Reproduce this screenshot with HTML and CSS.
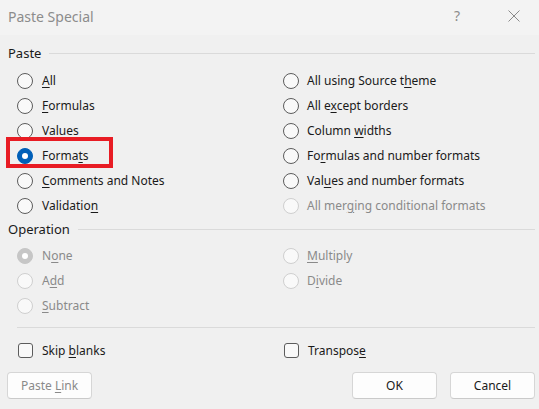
FILE: index.html
```html
<!DOCTYPE html>
<html>
<head>
<meta charset="utf-8">
<link rel="stylesheet" href="styles.css">
</head>
<body>
<div class="dialog">
  <div class="titlebar">
    <span class="title">Paste Special</span>
    <span class="help">?</span>
    <span class="close"><svg width="12" height="12" viewBox="0 0 12 12"><path d="M0.5 0.5 L11.5 11.5 M11.5 0.5 L0.5 11.5" stroke="#8a8a8a" stroke-width="1" fill="none"/></svg></span>
  </div>
  <div class="body">
    <div class="group-head"><span class="group-label">Paste</span><span class="group-line"></span></div>
    <div class="options paste">
      <div class="opt"><span class="radio"></span><span><u>A</u>ll</span></div>
      <div class="opt"><span class="radio"></span><span>All using Source t<u>h</u>eme</span></div>
      <div class="opt"><span class="radio"></span><span><u>F</u>ormulas</span></div>
      <div class="opt"><span class="radio"></span><span>All e<u>x</u>cept borders</span></div>
      <div class="opt"><span class="radio"></span><span>Values</span></div>
      <div class="opt"><span class="radio"></span><span>Column <u>w</u>idths</span></div>
      <div class="opt selected-wrap"><span class="radio checked"></span><span>Forma<u>t</u>s</span><span class="highlight"></span></div>
      <div class="opt"><span class="radio"></span><span>Fo<u>r</u>mulas and number formats</span></div>
      <div class="opt"><span class="radio"></span><span><u>C</u>omments and Notes</span></div>
      <div class="opt"><span class="radio"></span><span>Val<u>u</u>es and number formats</span></div>
      <div class="opt"><span class="radio"></span><span>Validatio<u>n</u></span></div>
      <div class="opt disabled"><span class="radio"></span><span>All mer<u>g</u>ing conditional formats</span></div>
    </div>
    <div class="group-head op-head"><span class="group-label">Operation</span><span class="group-line"></span></div>
    <div class="options operation">
      <div class="opt disabled"><span class="radio checked"></span><span>N<u>o</u>ne</span></div>
      <div class="opt disabled"><span class="radio"></span><span><u>M</u>ultiply</span></div>
      <div class="opt disabled"><span class="radio"></span><span>A<u>d</u>d</span></div>
      <div class="opt disabled"><span class="radio"></span><span>D<u>i</u>vide</span></div>
      <div class="opt disabled"><span class="radio"></span><span><u>S</u>ubtract</span></div>
      <div class="opt"></div>
    </div>
    <div class="separator"></div>
    <div class="checks">
      <div class="opt"><span class="check"></span><span>Skip <u>b</u>lanks</span></div>
      <div class="opt"><span class="check"></span><span>Transpos<u>e</u></span></div>
    </div>
    <div class="buttons">
      <button class="btn disabled-btn">Paste <u>L</u>ink</button>
      <span class="spacer"></span>
      <button class="btn">OK</button>
      <button class="btn">Cancel</button>
    </div>
  </div>
</div>
</body>
</html>
```
FILE: styles.css
```css
html, body {
  margin: 0;
  padding: 0;
  background: #f0f0f0;
}
.dialog {
  width: 539px;
  height: 409px;
  overflow: hidden;
  font-family: "Noto Sans", "Liberation Sans", sans-serif;
  font-size: 12px;
  color: #1a1a1a;
  background: #f0f0f0;
}
u {
  text-underline-offset: 2px;
  text-decoration-thickness: 1px;
}
.titlebar {
  height: 35px;
  background: #f3f3f3;
  display: flex;
  align-items: center;
  padding-left: 8px;
  box-sizing: border-box;
}
.title {
  font-size: 14px;
  color: #8c8c8c;
  flex: 1;
  padding-bottom: 2px;
}
.help {
  font-size: 14px;
  color: #8c8c8c;
  width: 14px;
  margin-right: 40px;
  padding-bottom: 4px;
}
.close {
  width: 12px;
  height: 12px;
  margin-right: 19px;
  display: flex;
  margin-bottom: 4px;
}
.body {
  padding: 8px 4px 0 8px;
}
.group-head {
  display: flex;
  align-items: center;
  height: 20px;
}
.group-label {
  font-size: 13px;
  color: #1a1a1a;
  margin-right: 8px;
}
.group-line {
  flex: 1;
  border-top: 1px solid #dadada;
  margin-top: 1px;
}
.options {
  display: grid;
  grid-template-columns: 266px 1fr;
  grid-auto-rows: 25px;
  margin-top: 5px;
  padding-left: 9px;
}
.opt {
  display: flex;
  align-items: center;
  gap: 9px;
  position: relative;
}
.paste .opt:nth-child(even),
.operation .opt:nth-child(even) {
  gap: 8px;
}
.radio {
  width: 14px;
  height: 14px;
  border: 1px solid #5c5c5c;
  border-radius: 50%;
  background: #f9f9f9;
  flex: none;
  box-sizing: content-box;
}
.radio.checked {
  background: #005fb8;
  border-color: #005fb8;
  position: relative;
}
.radio.checked::after {
  content: "";
  position: absolute;
  left: 4px;
  top: 4px;
  width: 6px;
  height: 6px;
  border-radius: 50%;
  background: #ffffff;
}
.disabled {
  color: #8a8a8a;
}
.disabled .radio {
  border-color: #cfcfcf;
  background: #f9f9f9;
}
.disabled .radio.checked {
  background: #c6c6c6;
  border-color: #c6c6c6;
}
.highlight {
  position: absolute;
  left: -11px;
  top: -6px;
  width: 99px;
  height: 23px;
  border: 4px solid #e81c24;
  pointer-events: none;
}
.op-head {
  margin-top: 1px;
}
.operation {
  margin-top: 4px;
}
.separator {
  margin: 9px 0 0 9px;
  border-top: 1px solid #dadada;
}
.checks {
  display: grid;
  grid-template-columns: 266px 1fr;
  height: 24px;
  margin-top: 10px;
  padding-left: 10px;
}
.check {
  width: 13px;
  height: 13px;
  border: 1px solid #5c5c5c;
  border-radius: 3px;
  background: #f9f9f9;
  flex: none;
}
.buttons {
  display: flex;
  margin-top: 10px;
  margin-left: -1px;
  gap: 13px;
}
.spacer {
  flex: 1;
}
.btn {
  width: 85px;
  height: 27px;
  font-family: inherit;
  font-size: 12px;
  color: #1a1a1a;
  background: #fdfdfd;
  border: 1px solid #d6d6d6;
  border-bottom-color: #cacaca;
  border-radius: 4px;
  padding: 0;
}
.disabled-btn {
  color: #8a8a8a;
}
```
